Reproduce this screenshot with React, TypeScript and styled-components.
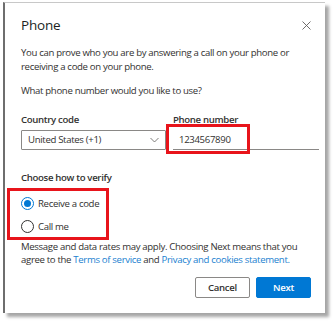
import React from 'react';
import styled, { createGlobalStyle } from 'styled-components';

const GlobalStyle = createGlobalStyle`
  html, body {
    margin: 0;
    padding: 0;
    background: #ffffff;
  }
  body {
    font-family: 'Open Sans', 'Noto Sans', sans-serif;
    color: #323130;
    letter-spacing: -0.33px;
  }
`;

const Page = styled.div`
  width: 336px;
  height: 322px;
  padding: 2px 0 0 3px;
  box-sizing: border-box;
`;

const Dialog = styled.div`
  width: 322px;
  height: 311px;
  box-sizing: border-box;
  background: #ffffff;
  border-left: 2px solid #6e6e6e;
  border-top: 1px solid #c8c8c8;
  box-shadow: 4px 4px 3px rgba(0, 0, 0, 0.35);
  padding: 11px 14px 0 16px;
  display: flex;
  flex-direction: column;
`;

const Header = styled.div`
  display: flex;
  align-items: center;
  justify-content: space-between;
  height: 22px;
`;

const Title = styled.h1`
  margin: 0;
  font-size: 13.5px;
  font-weight: 400;
  letter-spacing: -0.2px;
  color: #201f1e;
`;

const CloseButton = styled.button`
  border: 0;
  background: none;
  padding: 0;
  width: 10px;
  height: 10px;
  display: flex;
  align-items: center;
  justify-content: center;
  cursor: pointer;
`;

const Paragraph = styled.p<{ $top: number }>`
  margin: ${(p) => p.$top}px 0 0;
  font-size: 9.6px;
  line-height: 13.5px;
  color: #323130;
`;

const Fields = styled.div`
  display: grid;
  grid-template-columns: 145px 146px;
  column-gap: 7px;
  margin-top: 15px;
`;

const Field = styled.div`
  position: relative;
  display: flex;
  flex-direction: column;
`;

const Label = styled.label`
  font-size: 9.6px;
  font-weight: 600;
  line-height: 13px;
  color: #323130;
  margin-bottom: 4px;
`;

const Select = styled.div`
  height: 20px;
  box-sizing: border-box;
  border: 1px solid #8a8886;
  border-radius: 1px;
  display: flex;
  align-items: center;
  justify-content: space-between;
  padding: 0 6px;
  font-size: 9.6px;
  color: #323130;
`;

const Input = styled.div`
  height: 20px;
  box-sizing: border-box;
  border-bottom: 1px solid #8a8886;
  display: flex;
  align-items: center;
  padding-left: 6px;
  font-size: 9.6px;
  color: #323130;
`;

const Highlight = styled.div<{ $left: number; $top: number; $w: number; $h: number }>`
  position: absolute;
  left: ${(p) => p.$left}px;
  top: ${(p) => p.$top}px;
  width: ${(p) => p.$w}px;
  height: ${(p) => p.$h}px;
  box-sizing: border-box;
  border: 3px solid #e8141b;
  pointer-events: none;
`;

const SectionLabel = styled.div`
  font-size: 9.6px;
  font-weight: 600;
  line-height: 13px;
  margin-top: 21px;
  color: #323130;
`;

const RadioGroup = styled.div`
  position: relative;
  display: flex;
  flex-direction: column;
  gap: 8px;
  margin-top: 12px;
`;

const RadioRow = styled.label`
  display: flex;
  align-items: center;
  gap: 4px;
  font-size: 9.6px;
  line-height: 15px;
  color: #323130;
`;

const RadioCircle = styled.span<{ $checked: boolean }>`
  width: 13px;
  height: 13px;
  box-sizing: border-box;
  border-radius: 50%;
  border: 1px solid ${(p) => (p.$checked ? '#0078d4' : '#323130')};
  display: flex;
  align-items: center;
  justify-content: center;
  &::after {
    content: '';
    width: 7px;
    height: 7px;
    border-radius: 50%;
    background: ${(p) => (p.$checked ? '#0078d4' : 'transparent')};
  }
`;

const Note = styled.p`
  margin: 6px 0 0;
  font-size: 9.6px;
  line-height: 13.5px;
  color: #323130;
`;

const Link = styled.a`
  color: #1b7fd0;
  text-decoration: none;
`;

const Footer = styled.div`
  display: flex;
  justify-content: flex-end;
  gap: 6px;
  margin-top: 10px;
`;

const Button = styled.button<{ $primary?: boolean }>`
  width: 55px;
  height: 21px;
  box-sizing: border-box;
  border-radius: 2px;
  border: 1px solid ${(p) => (p.$primary ? '#0078d4' : '#8a8886')};
  background: ${(p) => (p.$primary ? '#0078d4' : '#ffffff')};
  color: ${(p) => (p.$primary ? '#ffffff' : '#323130')};
  font-family: inherit;
  letter-spacing: -0.3px;
  font-size: 9.6px;
  font-weight: 600;
  padding: 0;
`;

export default function App() {
  return (
    <Page>
      <GlobalStyle />
      <Dialog>
        <Header>
          <Title>Phone</Title>
          <CloseButton aria-label="Close">
            <svg width="9" height="9" viewBox="0 0 9 9">
              <path d="M0.5 0.5L8.5 8.5M8.5 0.5L0.5 8.5" stroke="#605e5c" strokeWidth="0.9" />
            </svg>
          </CloseButton>
        </Header>
        <Paragraph $top={10}>
          You can prove who you are by answering a call on your phone or
          receiving a code on your phone.
        </Paragraph>
        <Paragraph $top={11}>What phone number would you like to use?</Paragraph>
        <Fields>
          <Field>
            <Label>Country code</Label>
            <Select>
              <span>United States (+1)</span>
              <svg width="9" height="6" viewBox="0 0 9 6">
                <path d="M0.5 1L4.5 5L8.5 1" fill="none" stroke="#605e5c" strokeWidth="0.8" />
              </svg>
            </Select>
          </Field>
          <Field>
            <Label>Phone number</Label>
            <Input>1234567890</Input>
            <Highlight $left={-7} $top={11} $w={84} $h={30} />
          </Field>
        </Fields>
        <SectionLabel>Choose how to verify</SectionLabel>
        <RadioGroup>
          <RadioRow>
            <RadioCircle $checked />
            Receive a code
          </RadioRow>
          <RadioRow>
            <RadioCircle $checked={false} />
            Call me
          </RadioRow>
          <Highlight $left={-14} $top={-8} $w={102} $h={52} />
        </RadioGroup>
        <Note>
          Message and data rates may apply. Choosing Next means that you
          agree to the <Link>Terms of service</Link> and{' '}
          <Link>Privacy and cookies statement.</Link>
        </Note>
        <Footer>
          <Button>Cancel</Button>
          <Button $primary>Next</Button>
        </Footer>
      </Dialog>
    </Page>
  );
}
